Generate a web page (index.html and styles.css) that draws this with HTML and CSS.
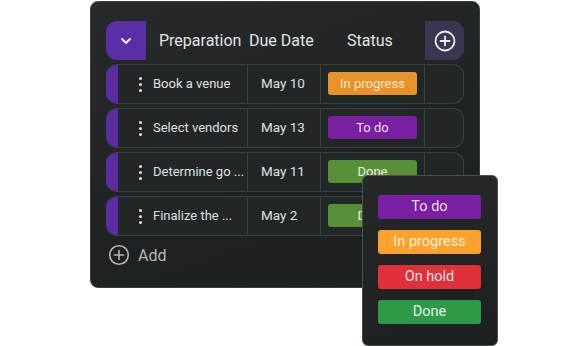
FILE: index.html
```html
<!DOCTYPE html>
<html>
<head>
    <title>Event planning</title>
    <link rel="stylesheet" href="styles.css">
</head>
<body>
    <div class="board">
        <div class="board-head">
            <button class="toggle" aria-label="Collapse">
                <svg width="12" height="8" viewBox="0 0 12 8"><path d="M2 2l4 4 4-4" fill="none" stroke="#fff" stroke-width="1.8" stroke-linecap="round" stroke-linejoin="round"/></svg>
            </button>
            <div class="col-title prep">Preparation</div>
            <div class="col-title date">Due Date</div>
            <div class="col-title status">Status</div>
            <button class="add-col" aria-label="Add column">
                <svg width="22" height="22" viewBox="0 0 22 22"><circle cx="11" cy="11" r="9.5" fill="none" stroke="#eee" stroke-width="1.8"/><path d="M11 6.5v9M6.5 11h9" stroke="#eee" stroke-width="1.8" stroke-linecap="round"/></svg>
            </button>
        </div>

        <div class="rows">
            <div class="row">
                <div class="stripe"></div>
                <div class="cell task"><span class="dots"><i></i><i></i><i></i></span>Book a venue</div>
                <div class="cell date">May 10</div>
                <div class="cell state"><span class="badge progress">In progress</span></div>
                <div class="cell end"></div>
            </div>
            <div class="row">
                <div class="stripe"></div>
                <div class="cell task"><span class="dots"><i></i><i></i><i></i></span>Select vendors</div>
                <div class="cell date">May 13</div>
                <div class="cell state"><span class="badge todo">To do</span></div>
                <div class="cell end"></div>
            </div>
            <div class="row">
                <div class="stripe"></div>
                <div class="cell task"><span class="dots"><i></i><i></i><i></i></span>Determine go ...</div>
                <div class="cell date">May 11</div>
                <div class="cell state"><span class="badge done">Done</span></div>
                <div class="cell end"></div>
            </div>
            <div class="row">
                <div class="stripe"></div>
                <div class="cell task"><span class="dots"><i></i><i></i><i></i></span>Finalize the ...</div>
                <div class="cell date">May 2</div>
                <div class="cell state"><span class="badge done">Done</span></div>
                <div class="cell end"></div>
            </div>
        </div>

        <div class="add-row">
            <svg width="22" height="22" viewBox="0 0 22 22"><circle cx="11" cy="11" r="9.3" fill="none" stroke="#b4b8b8" stroke-width="1.6"/><path d="M11 6.5v9M6.5 11h9" stroke="#b4b8b8" stroke-width="1.6" stroke-linecap="round"/></svg>
            <span>Add</span>
        </div>

        <!-- status picker -->
        <div class="menu">
            <div class="option todo">To do</div>
            <div class="option progress">In progress</div>
            <div class="option hold">On hold</div>
            <div class="option done">Done</div>
        </div>
    </div>
</body>
</html>
```

FILE: styles.css
```css
html, body {
    height: 100%;
}

body {
    margin: 0;
    min-height: 346px;
    background: #fff;
    font-family: Roboto, "Noto Sans", sans-serif;
}

.board {
    position: relative;
    box-sizing: border-box;
    width: 390px;
    height: 287px;
    margin: 1px 0 0 90px;
    padding: 19px 15px 0 15px;
    background: linear-gradient(160deg, #262a2a 0%, #1f2222 60%, #1d2020 100%);
    border: 1px solid #3a4040;
    border-radius: 8px;
}

.board-head {
    display: grid;
    grid-template-columns: 40px 101px 73px 104px 40px;
    height: 39px;
    align-items: center;
}

.toggle {
    height: 39px;
    border: none;
    padding: 0;
    background: #5b2ea6;
    border-radius: 11px 0 0 11px;
    display: flex;
    align-items: center;
    justify-content: center;
}

.add-col {
    height: 39px;
    margin-left: 1px;
    border: none;
    padding: 0;
    background: #3b3550;
    border-radius: 0 11px 11px 0;
    display: flex;
    align-items: center;
    justify-content: center;
}

.col-title {
    color: #e2e4e4;
    font-size: 16px;
}

.col-title.prep { padding-left: 13px; }
.col-title.date { padding-left: 2px; }
.col-title.status { padding-left: 27px; }

.rows {
    display: flex;
    flex-direction: column;
    gap: 4px;
    margin-top: 4px;
}

.row {
    display: grid;
    grid-template-columns: 12px 129px 73px 104px 1fr;
    height: 40px;
    box-sizing: border-box;
    border: 1px solid #394040;
    border-left: none;
    border-radius: 11px;
    background: #232626;
    overflow: hidden;
}

.stripe {
    background: #5a2ea2;
}

.cell {
    display: flex;
    align-items: center;
    color: #dfe1e1;
    font-size: 13px;
    border-left: 1px solid #394040;
}

.cell.task {
    border-left: none;
    padding-left: 21px;
    padding-bottom: 1px;
}

.dots {
    display: flex;
    flex-direction: column;
    gap: 3px;
    margin-right: 11px;
    margin-top: 2px;
}

.dots i {
    width: 3px;
    height: 3px;
    border-radius: 50%;
    background: #e0e0e0;
}

.cell.date {
    padding-left: 13px;
    padding-bottom: 3px;
    font-size: 13.5px;
}

.cell.state {
    padding-left: 7px;
}

.badge {
    width: 89px;
    height: 23px;
    line-height: 23px;
    text-align: center;
    border-radius: 3px;
    font-size: 13px;
    color: #f1eee8;
    margin-bottom: 2px;
}

.badge.progress { background: #e8922c; color: #fbe4c6; }
.badge.todo { background: #7a1fa0; color: #eadcf0; }
.badge.done { background: #5a8f3a; color: #e6efe0; }

.add-row {
    display: flex;
    align-items: center;
    gap: 8px;
    margin-top: 8px;
    padding-left: 2px;
    color: #b4b8b8;
    font-size: 16px;
}

.menu {
    position: absolute;
    left: 271px;
    top: 173px;
    box-sizing: border-box;
    width: 136px;
    height: 171px;
    padding: 19px 16px 0 15px;
    display: flex;
    flex-direction: column;
    gap: 11px;
    background: linear-gradient(170deg, #252929 0%, #1d2020 100%);
    border: 1px solid #4a5050;
    border-radius: 6px;
}

.option {
    height: 24px;
    line-height: 24px;
    text-align: center;
    border-radius: 3px;
    font-size: 14.5px;
    color: #f0ece8;
}

.option.todo { background: #7b1fa2; color: #eedff4; }
.option.progress { background: #ffa12d; color: #fff0dc; }
.option.hold { background: #e0303a; color: #fbe0e0; }
.option.done { background: #2e9a47; color: #e2f2e6; }
```
